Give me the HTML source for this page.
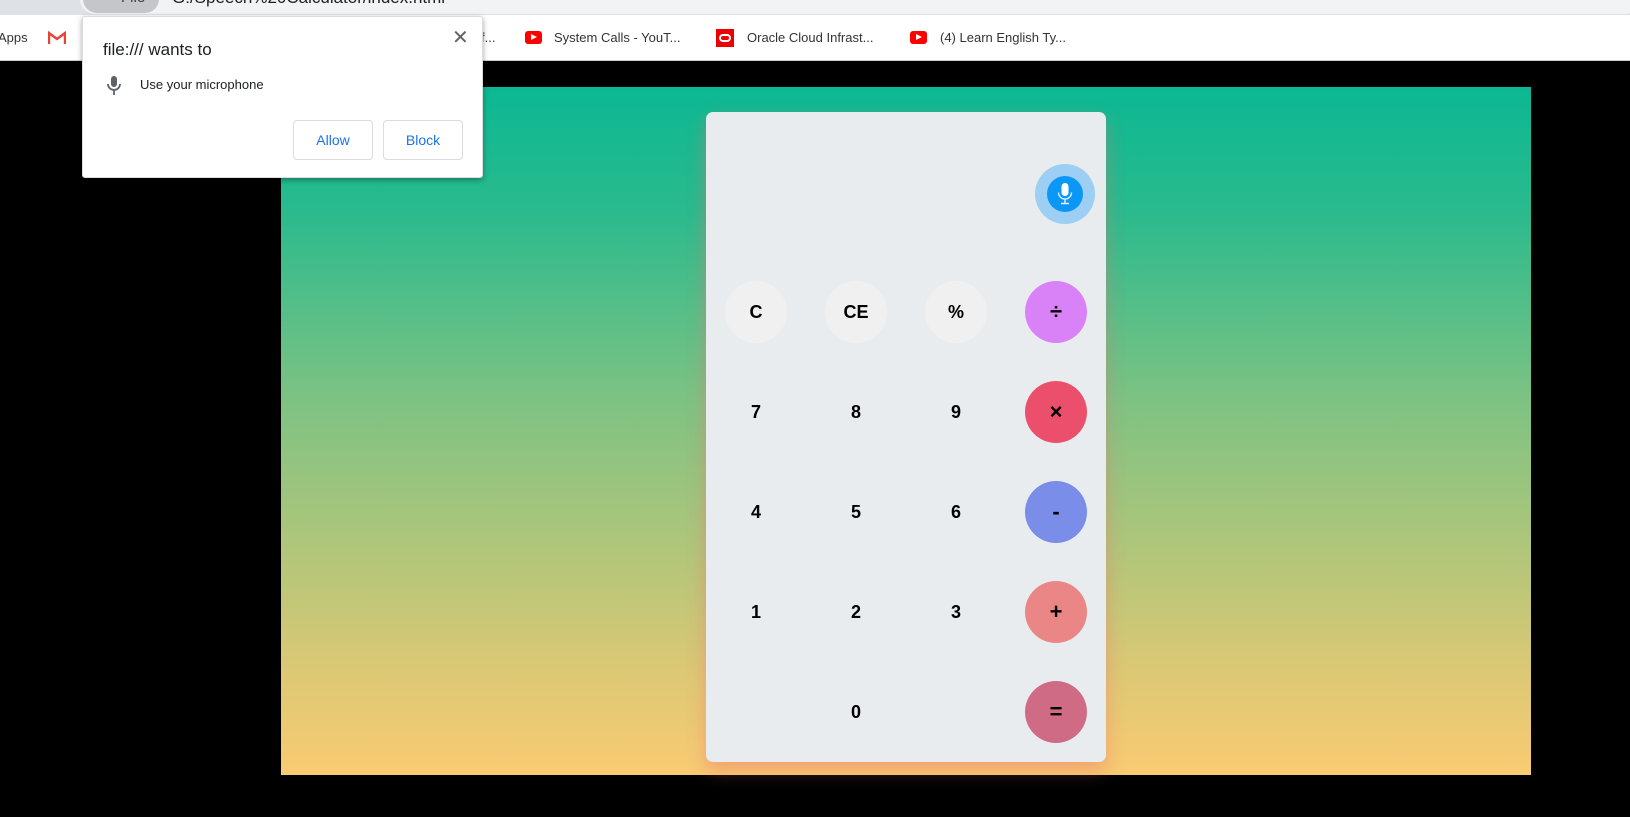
<!DOCTYPE html>
<html><head><meta charset="utf-8"><style>
*{margin:0;padding:0;box-sizing:border-box}
body{width:1630px;height:817px;background:#000;position:relative;overflow:hidden;font-family:"Liberation Sans",Arial,sans-serif}
.top{position:absolute;left:0;top:0;width:1630px;height:15px;background:#dee1e6}
.addr{position:absolute;left:80px;top:-16px;width:1560px;height:30px;background:#f1f3f4;border-radius:15px}
.chip{position:absolute;left:83px;top:-16px;width:76px;height:29px;background:#c4c6c9;border-radius:14px}
.chip span{position:absolute;left:38px;top:5px;font-size:15px;color:#3c4043}
.url{position:absolute;left:172px;top:-12px;font-size:17px;color:#202124}
.bm{position:absolute;left:0;top:15px;width:1630px;height:46px;background:#fff;border-bottom:1px solid #ccc}
.bmt{position:absolute;top:30px;font-size:13px;color:#333}
.yt{position:absolute;top:31px;width:17px;height:13px;background:#f00;border-radius:3px}
.yt:after{content:"";position:absolute;left:6px;top:3px;border-left:6px solid #fff;border-top:3.5px solid transparent;border-bottom:3.5px solid transparent}
.grad{position:absolute;left:281px;top:87px;width:1250px;height:688px;background:linear-gradient(#0bb893 0%,#2aba8d 18%,#7cc283 45%,#b2c67a 68%,#dcc875 85%,#f9cb72 100%)}
.card{position:absolute;left:706px;top:112px;width:400px;height:650px;background:#e8ecef;border-radius:7px;box-shadow:0 8px 18px rgba(235,110,110,.45)}
.b{position:absolute;width:62px;height:62px;border-radius:50%;display:flex;align-items:center;justify-content:center;font-weight:bold;font-size:18px;color:#000}
.op{font-size:22px}
.mic{position:absolute;left:1035px;top:164px;width:60px;height:60px;border-radius:50%;background:#9dcff5}
.mic i{position:absolute;left:12px;top:12px;width:36px;height:36px;border-radius:50%;background:#0a97f5}
.pop{position:absolute;left:82px;top:16px;width:401px;height:162px;background:#fff;border:1px solid #ddd;border-radius:3px;box-shadow:0 2px 6px rgba(0,0,0,.35)}
.btn{position:absolute;top:103px;width:80px;height:40px;border:1px solid #dadce0;border-radius:4px;color:#1a73e8;font-size:14px;display:flex;align-items:center;justify-content:center}
</style></head><body>
<div class="top"></div>
<div class="addr"></div>
<div class="chip"><span>File</span></div>
<div class="url">G:/Speech%20Calculator/index.html</div>
<div class="bm"></div>
<div class="bmt" style="left:-2px">Apps</div>
<svg style="position:absolute;left:48px;top:31px" width="18" height="14" viewBox="0 0 18 14"><path d="M1 13V2l8 6 8-6v11" fill="none" stroke="#ea4335" stroke-width="2.4"/></svg>
<div class="bmt" style="left:481px">f...</div>
<div class="yt" style="left:525px"></div><div class="bmt" style="left:554px">System Calls - YouT...</div>
<div style="position:absolute;left:716px;top:29px;width:18px;height:18px;background:#e00"><div style="position:absolute;left:3px;top:5px;width:12px;height:8px;border:2px solid #fff;border-radius:4px"></div></div>
<div class="bmt" style="left:747px">Oracle Cloud Infrast...</div>
<div class="yt" style="left:910px"></div><div class="bmt" style="left:940px">(4) Learn English Ty...</div>
<div class="grad"></div>
<div class="card"></div>
<div class="mic"><i></i><svg style="position:absolute;left:20px;top:18px" width="20" height="24" viewBox="0 0 20 24"><rect x="6.5" y="1" width="7" height="13" rx="3.5" fill="#fff"/><path d="M3.5 10.5a6.5 6.5 0 0 0 13 0M10 17v4M6 21.5h8" fill="none" stroke="#e0f0ff" stroke-width="1.4"/></svg></div>
<div class="b" style="left:725px;top:281px;background:#f0f0f0">C</div>
<div class="b" style="left:825px;top:281px;background:#f0f0f0">CE</div>
<div class="b" style="left:925px;top:281px;background:#f0f0f0">%</div>
<div class="b op" style="left:1025px;top:281px;background:#d982f7">÷</div>
<div class="b" style="left:725px;top:381px">7</div><div class="b" style="left:825px;top:381px">8</div><div class="b" style="left:925px;top:381px">9</div>
<div class="b op" style="left:1025px;top:381px;background:#ec4f6b">×</div>
<div class="b" style="left:725px;top:481px">4</div><div class="b" style="left:825px;top:481px">5</div><div class="b" style="left:925px;top:481px">6</div>
<div class="b op" style="left:1025px;top:481px;background:#798de9">-</div>
<div class="b" style="left:725px;top:581px">1</div><div class="b" style="left:825px;top:581px">2</div><div class="b" style="left:925px;top:581px">3</div>
<div class="b op" style="left:1025px;top:581px;background:#eb8686">+</div>
<div class="b" style="left:825px;top:681px">0</div>
<div class="b op" style="left:1025px;top:681px;background:#cf6b85">=</div>
<div class="pop">
<div style="position:absolute;left:20px;top:23px;font-size:17px;color:#202124">file:/// wants to</div>
<div style="position:absolute;left:369px;top:8px;font-size:20px;color:#5f6368">✕</div>
<svg style="position:absolute;left:24px;top:59px" width="14" height="20" viewBox="0 0 14 20"><rect x="4" y="0" width="6" height="11" rx="3" fill="#5f6368"/><path d="M1 8a6 6 0 0 0 12 0M7 14v5" fill="none" stroke="#5f6368" stroke-width="1.8"/></svg>
<div style="position:absolute;left:57px;top:60px;font-size:13px;color:#202124">Use your microphone</div>
<div class="btn" style="left:210px">Allow</div>
<div class="btn" style="left:300px">Block</div>
</div>
</body></html>
